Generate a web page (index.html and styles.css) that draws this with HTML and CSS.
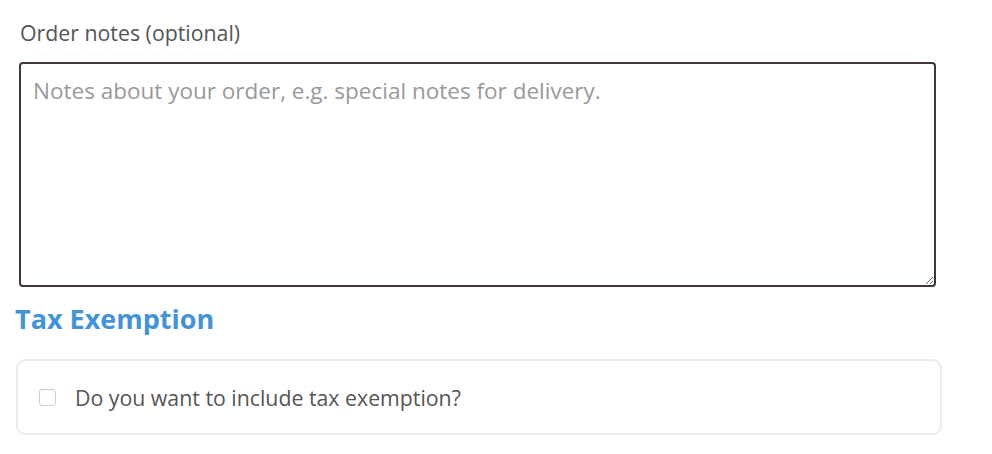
FILE: index.html
```html
<!DOCTYPE html>
<html lang="en">

<head>
    <meta charset="UTF-8">
    <meta name="viewport" content="width=device-width, initial-scale=1.0">
    <title>Checkout</title>
    <link rel="stylesheet" href="styles.css">
</head>

<body>
    <div class="checkout">
        <div class="notes">
            <label for="order_comments">Order notes (optional)</label>
            <textarea id="order_comments" placeholder="Notes about your order, e.g. special notes for delivery."></textarea>
        </div>

        <h3 class="tax-title">Tax Exemption</h3>

        <div class="tax-box">
            <label class="tax-check">
                <input type="checkbox">
                <span class="box"></span>
                <span>Do you want to include tax exemption?</span>
            </label>
        </div>
    </div>
</body>

</html>
```

FILE: styles.css
```css
* {
    margin: 0;
    padding: 0;
    box-sizing: border-box;
}

body {
    font-family: "Open Sans", "Liberation Sans", sans-serif;
    color: #555;
    background: #fff;
}

.checkout {
    width: 992px;
    padding-top: 19px;
}

.notes {
    padding: 0 56px 0 19px;
}

.notes label {
    display: block;
    padding-left: 1px;
    font-size: 21.3px;
    line-height: 28px;
    color: #555;
    margin-bottom: 15px;
}

.notes textarea {
    display: block;
    width: 100%;
    height: 225px;
    border: 2px solid #433636;
    border-radius: 4px;
    padding: 11px 12px;
    font: 22.5px/32px "Open Sans", "Liberation Sans", sans-serif;
    color: #555;
    outline: none;
}

.notes textarea::placeholder {
    color: #999;
}

.tax-title {
    margin: 12px 0 0 15px;
    font-size: 27px;
    line-height: 40px;
    font-weight: 700;
    color: #4394d4;
}

.tax-box {
    width: 926px;
    margin: 20px 0 0 16px;
    height: 76px;
    border: 2px solid #ebebeb;
    border-radius: 9px;
    display: flex;
    align-items: center;
    padding-left: 21px;
}

.tax-check {
    display: flex;
    align-items: center;
    gap: 19px;
    font-size: 21.3px;
    color: #555;
    cursor: pointer;
}

.tax-check input {
    display: none;
}

.tax-check .box {
    width: 17px;
    height: 17px;
    border: 1px solid #cfcfcf;
    border-radius: 3px;
    background: #fff;
    box-shadow: inset 0 1px 1px rgba(0, 0, 0, 0.04);
}
```
